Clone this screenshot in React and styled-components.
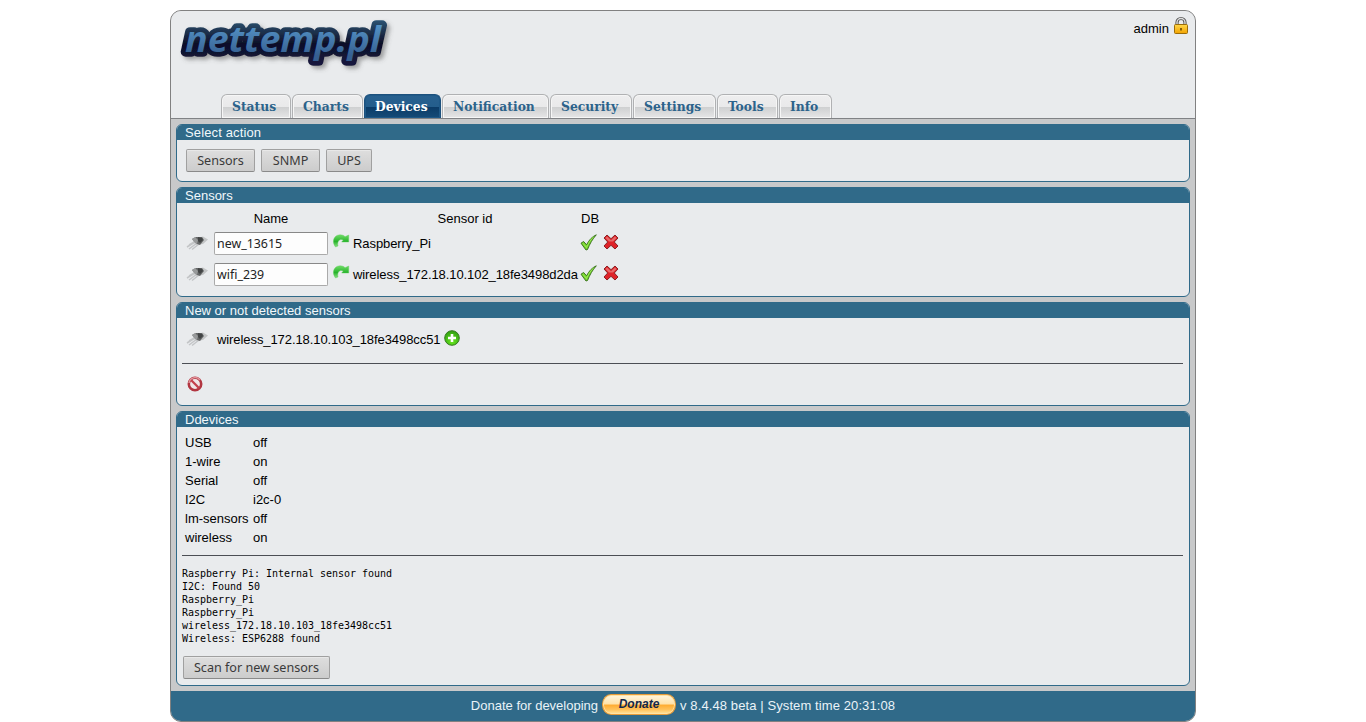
import React from "react";
import styled, { createGlobalStyle } from "styled-components";

const Global = createGlobalStyle`
  * { box-sizing: border-box; }
  html, body { margin: 0; padding: 0; background: #fff; overflow: hidden; }
  body { font: 13px/15px "Liberation Sans", Arial, sans-serif; color: #000; }
  svg { display: block; flex: none; overflow: visible; }
`;

const Page = styled.div`
  width: 1026px;
  height: 712px;
  margin: 10px auto 0;
  border: 1px solid #818181;
  border-radius: 11px;
  overflow: hidden;
  background: #c8c9ca;
  display: flex;
  flex-direction: column;
`;
const Header = styled.header`
  height: 108px;
  background: #e9ebed;
  border-bottom: 1px solid #808285;
  display: flex;
  flex-direction: column;
  justify-content: space-between;
`;
const HeaderTop = styled.div`
  display: flex;
  justify-content: space-between;
`;
const User = styled.div`
  display: flex;
  align-items: flex-start;
  gap: 4px;
  padding: 5px 6px 0 0;
  span { margin-top: 5px; }
`;
const Tabs = styled.nav`
  display: flex;
  gap: 1px;
  padding-left: 50px;
`;
const Tab = styled.a`
  height: 24px;
  width: ${(p) => p.$w}px;
  padding-left: 10px;
  white-space: nowrap;
  border: 1px solid ${(p) => (p.$active ? "#1d517d" : "#b0b1b3")};
  border-bottom: 0;
  border-radius: 6px 6px 0 0;
  box-shadow: inset 0 0 0 1px ${(p) => (p.$active ? "#1f5988" : "#f6f6f6")};
  background: ${(p) =>
    p.$active
      ? "linear-gradient(#28608f 0, #245e8c 52%, #0b3c68 54%, #164b78 100%)"
      : "linear-gradient(#eeeeef 0, #e9e9ea 52%, #cfd0d1 54%, #e6e6e7 100%)"};
  color: ${(p) => (p.$active ? "#fff" : "#2c638b")};
  font: bold 13.7px/23px "DejaVu Serif Condensed", "DejaVu Serif", serif;
  font-stretch: condensed;
`;
const Main = styled.main`
  flex: 1;
  padding: 5px;
  display: flex;
  flex-direction: column;
  gap: 5px;
`;
const PanelBox = styled.section`
  height: ${(p) => p.$h}px;
  border: 1px solid #306a89;
  border-radius: 6px;
  background: #e9ebed;
  overflow: hidden;
  flex: none;
`;
const PanelTitle = styled.h2`
  margin: 0;
  height: 15px;
  padding-left: 8px;
  background: #306a89;
  color: #f2f8fb;
  font: 13px/15px "Liberation Sans", Arial, sans-serif;
  letter-spacing: ${(p) => p.$track || 0}px;
`;
const Actions = styled.div`
  display: flex;
  gap: 6px;
  padding: 9px 0 0 9px;
`;
const Button = styled.button`
  width: ${(p) => p.$w}px;
  height: 23px;
  padding: 0;
  white-space: nowrap;
  border: 1px solid #a0a0a0;
  border-bottom-color: #8a8a8a;
  border-radius: 2px;
  box-shadow: inset 0 1px 0 #e8e8e8;
  background: linear-gradient(#dedede, #cccccc);
  color: #3a3a3a;
  font: 12.6px/20px "Noto Sans", sans-serif;
`;
const SensorGrid = styled.div`
  display: grid;
  grid-template-columns: 28px 114px 25px 224px 25px 20px;
  grid-template-rows: 22px 31px 31px;
  align-items: center;
  padding: 3px 0 0 9px;
`;
const SensorId = styled.span`
  white-space: nowrap;
  letter-spacing: -0.08px;
`;
const Head = styled.span`
  text-align: ${(p) => (p.$left ? "left" : "center")};
  margin-left: ${(p) => (p.$left ? 4 : 0)}px;
  padding-top: 3px;
`;
const NameInput = styled.input`
  width: 114px;
  height: 23px;
  padding: 0 2px;
  border: 1px solid #aaa;
  border-top-color: #888;
  border-radius: 2px;
  background: #fdfdfd;
  color: #222;
  font: 12.4px "Noto Sans", sans-serif;
`;
const Cell = styled.span`
  display: flex;
  padding: 0 0 ${(p) => p.$up || 0}px ${(p) => p.$in || 0}px;
`;
const NewSensor = styled.div`
  display: flex;
  align-items: center;
  gap: 4px;
  height: 45px;
  padding: 0 0 4px 9px;
  ${SensorId} { margin-left: 4px; padding-top: 1px; }
  ${SensorId} + svg { margin-bottom: 1px; }
`;
const Rule = styled.hr`
  margin: 0 6px 0 5px;
  border: 0;
  height: 1px;
  background: #4b4e54;
`;
const Blocked = styled.div`
  padding: 12px 0 0 10px;
`;
const DeviceGrid = styled.dl`
  display: grid;
  grid-template-columns: 68px auto;
  grid-auto-rows: 19px;
  margin: 0;
  height: 128px;
  padding: 8px 0 0 8px;
  dt, dd { margin: 0; white-space: nowrap; }
`;
const Log = styled.pre`
  margin: 11px 0 11px 5px;
  font: 10px/13px "DejaVu Sans Mono", monospace;
  letter-spacing: -0.02px;
`;
const ScanRow = styled.div`
  padding-left: 6px;
`;
const Footer = styled.footer`
  height: 30px;
  background: #306a89;
  color: #eaf3f8;
  display: flex;
  justify-content: center;
  align-items: flex-start;
  gap: 4px;
  padding-top: 3px;
  > span { margin-top: 4px; white-space: nowrap; }
`;
const Version = styled.span`
  letter-spacing: 0.1px;
`;
const Donate = styled.button`
  width: 74px;
  height: 21px;
  padding: 0 0 2px;
  border: 1px solid #e79b38;
  border-radius: 9px / 10px;
  box-shadow: inset 0 0 0 1px #ffe3a5;
  background: linear-gradient(#fff6df 0, #ffe3ac 45%, #ffae35 55%, #ffc35d 78%, #ffe5a3 100%);
  color: #12284b;
  font: italic bold 12px/16px "Liberation Sans", Arial, sans-serif;
`;

const Logo = () => (
  <svg width="224" height="62" viewBox="0 0 224 62">
    <defs>
      <linearGradient id="logoFace" x1="0" y1="0" x2="0" y2="1">
        <stop offset="0.2" stopColor="#5595c8" />
        <stop offset="0.85" stopColor="#365f91" />
      </linearGradient>
      <linearGradient id="logoEdge" x1="0" y1="0" x2="0" y2="1">
        <stop offset="0.1" stopColor="#2f5878" />
        <stop offset="0.6" stopColor="#0e1028" />
        <stop offset="1" stopColor="#15143c" />
      </linearGradient>
      <filter id="logoShade" x="-10%" y="-10%" width="120%" height="140%">
        <feDropShadow dx="3" dy="3" stdDeviation="2" floodColor="#555" floodOpacity="0.5" />
      </filter>
    </defs>
    <g fontFamily="Noto Sans, sans-serif" fontSize="36" fontWeight="700" fontStyle="italic">
      <text x="14" y="41" textLength="196" lengthAdjust="spacingAndGlyphs" fill="url(#logoEdge)" stroke="url(#logoEdge)" strokeWidth="9.5" strokeLinejoin="round" filter="url(#logoShade)">nettemp.pl</text>
      <text x="14" y="41" textLength="196" lengthAdjust="spacingAndGlyphs" fill="url(#logoFace)">nettemp.pl</text>
    </g>
  </svg>
);

const LockIcon = () => (
  <svg width="16" height="18" viewBox="0 0 16 18">
    <defs>
      <linearGradient id="lockBody" x1="0" y1="0" x2="0" y2="1">
        <stop offset="0" stopColor="#ffd84a" />
        <stop offset="1" stopColor="#f2a300" />
      </linearGradient>
    </defs>
    <path d="M4 9V6.500a4 4 0 0 1 8 0V9" fill="none" stroke="#555" strokeWidth="3.2" />
    <path d="M4 9V6.500a4 4 0 0 1 8 0V9" fill="none" stroke="#ddd" strokeWidth="1.4" />
    <rect x="1.5" y="8.5" width="13" height="9" rx="1" fill="url(#lockBody)" stroke="#9b6c09" />
    <path d="M8 12v2.500" stroke="#6b4700" strokeWidth="1.6" />
  </svg>
);

const SensorIcon = () => (
  <svg width="23" height="16" viewBox="0 0 23 16">
    <path d="M8 4L17 1.5 22 4.500l-5 4.500-8 1z" fill="#c3c5c6" />
    <path d="M9 7L1 12M11 8L3 14M13 9L6 14.500M10 6L3 10" stroke="#c3c5c7" strokeWidth="1.5" />
    <path d="M6 4l4-2 6 0 2 3-4 5-3-1z" fill="#666869" />
    <path d="M6 4l3-2 3 3-1 4-3-2z" fill="#97999a" />
    <path d="M12 2l4 1 1 2-3 3-2-2z" fill="#424445" />
  </svg>
);

const RedoIcon = () => (
  <svg width="16" height="14" viewBox="0 0 16 14">
    <defs>
      <linearGradient id="redoFill" x1="0" y1="0" x2="0" y2="1">
        <stop offset="0" stopColor="#6fdc66" />
        <stop offset="0.55" stopColor="#28b32c" />
        <stop offset="1" stopColor="#8ce383" />
      </linearGradient>
    </defs>
    <path d="M2.500 13C-1.500 8 .5 1 7 .8c2.200 0 3.800.7 5 1.900L15.700 1v7H8.700L10.300 6C7 4.200 3.800 7 5 12z" fill="url(#redoFill)" stroke="#58c957" strokeWidth=".4" />
  </svg>
);

const CheckIcon = () => (
  <svg width="18" height="17" viewBox="0 0 18 17">
    <path d="M1 9.200l2.600-1.700 3 3.300C9 6 12 2.800 16.300.8 12.500 5 9.700 10 7.500 15.500L6 16z" fill="#76d52b" stroke="#326b16" strokeWidth=".9" strokeLinejoin="round" />
    <path d="M3 9.500l3.500 4C8.500 9 11 5 13.500 3" fill="none" stroke="#a4ec64" strokeWidth=".8" />
  </svg>
);

const DeleteIcon = () => (
  <svg width="16" height="16" viewBox="0 0 16 16">
    <path d="M4 1l4 3.700L12 1l3 3-3.700 4L15 12l-3 3-4-3.700L4 15l-3-3 3.700-4L1 4z" fill="#df2329" stroke="#8b2224" strokeLinejoin="round" />
    <path d="M4 2.500l4 3.800 4-3.800 1.500 1.500L10 7.500H6L2.500 4z" fill="#e86b6b" />
  </svg>
);

const AddIcon = () => (
  <svg width="16" height="16" viewBox="0 0 16 16">
    <defs>
      <radialGradient id="addFill" cx="0.5" cy="0.75" r="0.7">
        <stop offset="0" stopColor="#66e51e" />
        <stop offset="1" stopColor="#35a313" />
      </radialGradient>
    </defs>
    <circle cx="8" cy="8" r="7.300" fill="url(#addFill)" stroke="#347a20" />
    <path d="M8 4v8M4 8h8" stroke="#fff" strokeWidth="2.600" />
  </svg>
);

const BlockIcon = () => (
  <svg width="16" height="16" viewBox="0 0 16 16">
    <circle cx="8" cy="8" r="6.200" fill="#f0e5e7" stroke="#b23641" strokeWidth="2.600" />
    <path d="M3.800 3.800l8.400 8.400" stroke="#c4404c" strokeWidth="2.300" />
    <path d="M2 7a6.200 6.200 0 0 1 11-3" fill="none" stroke="#e0949b" strokeWidth="1.500" />
  </svg>
);

const Panel = ({ title, height, track, children }) => (
  <PanelBox $h={height}>
    <PanelTitle $track={track}>{title}</PanelTitle>
    {children}
  </PanelBox>
);

const tabs = [
  ["Status", 70], ["Charts", 71], ["Devices", 77], ["Notification", 107],
  ["Security", 82], ["Settings", 83], ["Tools", 61], ["Info", 53],
];
const sensors = [
  ["new_13615", "Raspberry_Pi"],
  ["wifi_239", "wireless_172.18.10.102_18fe3498d2da"],
];
const devices = [
  ["USB", "off"], ["1-wire", "on"], ["Serial", "off"],
  ["I2C", "i2c-0"], ["lm-sensors", "off"], ["wireless", "on"],
];
const log = `Raspberry Pi: Internal sensor found
I2C: Found 50
Raspberry_Pi
Raspberry_Pi
wireless_172.18.10.103_18fe3498cc51
Wireless: ESP6288 found`;

export default function App() {
  return (
    <>
      <Global />
      <Page>
        <Header>
          <HeaderTop>
            <Logo />
            <User><span>admin</span><LockIcon /></User>
          </HeaderTop>
          <Tabs>
            {tabs.map(([name, w]) => (
              <Tab key={name} $w={w} $active={name === "Devices"}>{name}</Tab>
            ))}
          </Tabs>
        </Header>
        <Main>
          <Panel title="Select action" height={58} track={0.13}>
            <Actions>
              <Button $w={69}>Sensors</Button>
              <Button $w={59}>SNMP</Button>
              <Button $w={46}>UPS</Button>
            </Actions>
          </Panel>
          <Panel title="Sensors" height={110}>
            <SensorGrid>
              <span />
              <Head>Name</Head>
              <span />
              <Head>Sensor id</Head>
              <Head $left>DB</Head>
              <span />
              {sensors.map(([name, id]) => (
                <React.Fragment key={id}>
                  <Cell $up={2}><SensorIcon /></Cell>
                  <NameInput defaultValue={name} />
                  <Cell $in={5} $up={5}><RedoIcon /></Cell>
                  <SensorId>{id}</SensorId>
                  <Cell $in={3} $up={3}><CheckIcon /></Cell>
                  <Cell $in={1} $up={3}><DeleteIcon /></Cell>
                </React.Fragment>
              ))}
            </SensorGrid>
          </Panel>
          <Panel title="New or not detected sensors" height={104}>
            <NewSensor>
              <SensorIcon />
              <SensorId>wireless_172.18.10.103_18fe3498cc51</SensorId>
              <AddIcon />
            </NewSensor>
            <Rule />
            <Blocked><BlockIcon /></Blocked>
          </Panel>
          <Panel title="Ddevices" height={275}>
            <DeviceGrid>
              {devices.map(([name, state]) => (
                <React.Fragment key={name}><dt>{name}</dt><dd>{state}</dd></React.Fragment>
              ))}
            </DeviceGrid>
            <Rule />
            <Log>{log}</Log>
            <ScanRow><Button $w={147}>Scan for new sensors</Button></ScanRow>
          </Panel>
        </Main>
        <Footer>
          <span>Donate for developing</span>
          <Donate>Donate</Donate>
          <Version>v 8.4.48 beta | System time 20:31:08</Version>
        </Footer>
      </Page>
    </>
  );
}
